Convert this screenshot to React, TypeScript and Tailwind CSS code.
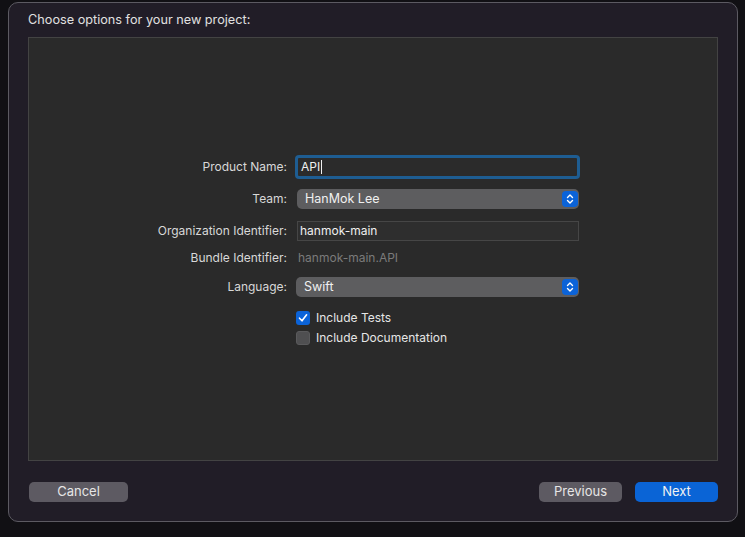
import React from "react";

const font = { fontFamily: "Inter, 'Noto Sans', sans-serif" };

function Stepper() {
  return (
    <div className="w-[16px] h-[16px] rounded-[4px] bg-[#0b63d8] flex items-center justify-center mr-[1px]">
      <svg width="10" height="12" viewBox="0 0 10 12" fill="none">
        <path d="M2.5 4.5 L5 2 L7.5 4.5" stroke="white" strokeWidth="1.4" strokeLinecap="round" strokeLinejoin="round" />
        <path d="M2.5 7.5 L5 10 L7.5 7.5" stroke="white" strokeWidth="1.4" strokeLinecap="round" strokeLinejoin="round" />
      </svg>
    </div>
  );
}

function Label({ children }: { children: React.ReactNode }) {
  return (
    <div className="w-[258px] text-right text-[12px] text-[#d8d8d8] leading-none shrink-0">{children}</div>
  );
}

export default function App() {
  return (
    <div className="w-[745px] h-[537px] bg-[#111014] pt-[2px] pl-[8px]" style={font}>
      <div className="w-[730px] h-[520px] rounded-[10px] border border-[#5c5a62] bg-[#211d27] flex flex-col">
        <div className="h-[34px] pl-[19px] flex items-center text-[12.7px] text-[#e0e0e0]">
          Choose options for your new project:
        </div>
        <div className="ml-[19px] w-[690px] h-[424px] border border-[#434343] bg-[#2a2a2a] pt-[117px] flex flex-col">
          {/* Product Name */}
          <div className="h-[24px] flex items-center">
            <Label>Product Name:</Label>
            <div className="ml-[8px] w-[285px] h-[24px] rounded-[4px] bg-[#1e5d92] p-[3px]">
              <div className="w-full h-full bg-[#2b2b2b] rounded-[1px] flex items-center pl-[3px] text-[12px] text-[#f0f0f0]">
                API<span className="inline-block w-[1px] h-[14px] bg-[#f0f0f0] ml-[1px]" />
              </div>
            </div>
          </div>
          {/* Team */}
          <div className="h-[20px] mt-[10px] flex items-center">
            <Label>Team:</Label>
            <div className="ml-[10px] w-[282px] h-[20px] rounded-[5px] bg-[#5d5d5f] flex items-center justify-between pl-[8px] text-[12.5px] text-[#f0f0f0]">
              <span>HanMok Lee</span>
              <Stepper />
            </div>
          </div>
          {/* Org */}
          <div className="h-[20px] mt-[12px] flex items-center">
            <Label>Organization Identifier:</Label>
            <div className="ml-[10px] w-[282px] h-[20px] bg-[#2e2e2e] border border-[#464646] flex items-center pl-[2px] text-[12px] text-[#f0f0f0]">
              hanmok-main
            </div>
          </div>
          {/* Bundle */}
          <div className="h-[16px] mt-[9px] flex items-center">
            <Label>Bundle Identifier:</Label>
            <div className="ml-[11px] text-[12px] text-[#7b7b7b] leading-none">hanmok-main.API</div>
          </div>
          {/* Language */}
          <div className="h-[20px] mt-[11px] flex items-center">
            <Label>Language:</Label>
            <div className="ml-[9px] w-[283px] h-[20px] rounded-[5px] bg-[#5d5d5f] flex items-center justify-between pl-[8px] text-[12.5px] text-[#f0f0f0]">
              <span>Swift</span>
              <Stepper />
            </div>
          </div>
          {/* Include Tests */}
          <div className="h-[16px] mt-[13px] flex items-center pl-[267px]">
            <div className="w-[14px] h-[14px] rounded-[3px] bg-[#0b63d8] flex items-center justify-center">
              <svg width="10" height="10" viewBox="0 0 10 10" fill="none">
                <path d="M1.5 5.2 L4 7.8 L8.6 1.8" stroke="white" strokeWidth="1.6" strokeLinecap="round" strokeLinejoin="round" />
              </svg>
            </div>
            <span className="ml-[6px] text-[12px] text-[#e6e6e6] leading-none">Include Tests</span>
          </div>
          {/* Include Documentation */}
          <div className="h-[16px] mt-[4px] flex items-center pl-[267px]">
            <div className="w-[14px] h-[14px] rounded-[3px] bg-[#4f4f51] border border-[#5a5a5c]" />
            <span className="ml-[6px] text-[12px] text-[#e6e6e6] leading-none">Include Documentation</span>
          </div>
        </div>
        <div className="mt-[21px] h-[20px] flex items-center justify-between pl-[20px] pr-[19px]">
          <button className="w-[99px] h-[20px] rounded-[5px] bg-[#5d5a62] text-[13px] text-[#e6e6e6] flex items-center justify-center">
            Cancel
          </button>
          <div className="flex items-center gap-[13px]">
            <button className="w-[83px] h-[20px] rounded-[5px] bg-[#5d5a62] text-[13px] text-[#e6e6e6] flex items-center justify-center">
              Previous
            </button>
            <button className="w-[83px] h-[20px] rounded-[5px] bg-[#0a64d6] text-[13px] text-[#f2f2f2] flex items-center justify-center">
              Next
            </button>
          </div>
        </div>
      </div>
    </div>
  );
}
